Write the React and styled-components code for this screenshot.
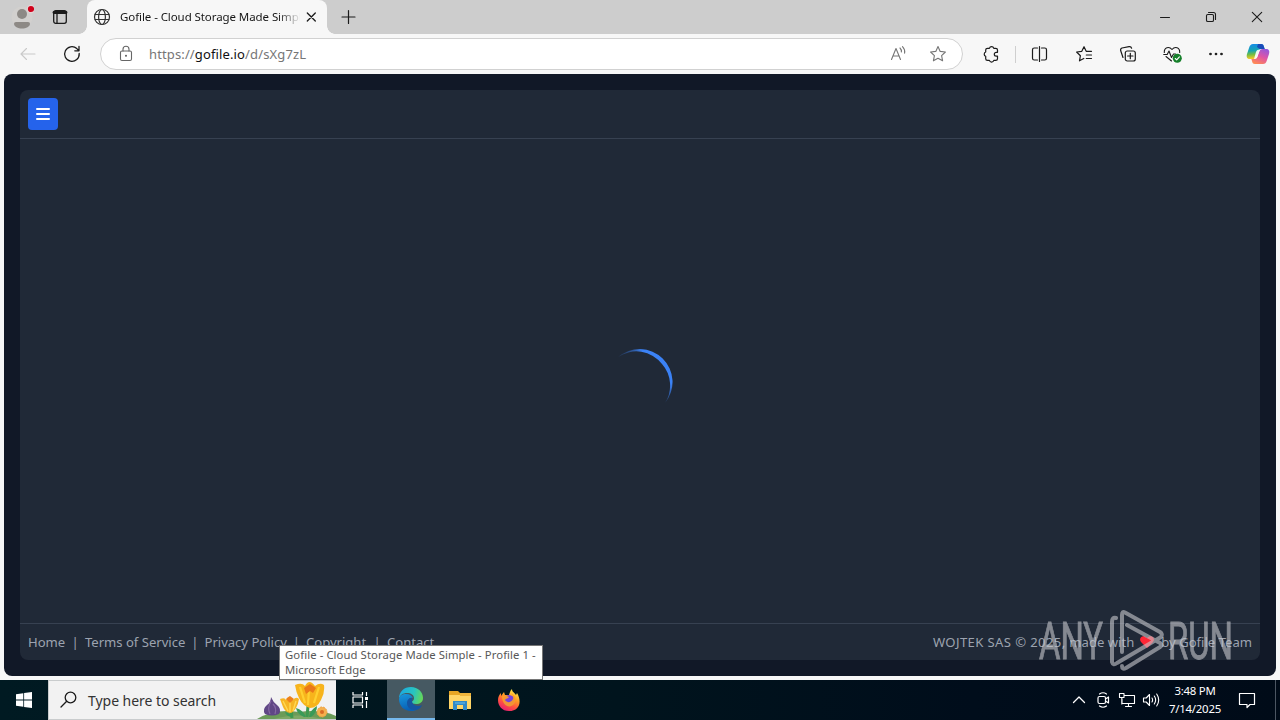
import React from "react";
import styled, { createGlobalStyle } from "styled-components";

const Global = createGlobalStyle`
  * { box-sizing: border-box; }
  body { margin: 0; overflow: hidden; font-family: "Noto Sans", "Open Sans", sans-serif; }
  svg { display: block; flex: none; }
`;

const Screen = styled.div`
  position: relative;
  width: 1280px;
  height: 720px;
  display: flex;
  flex-direction: column;
  background: #f7f7f7;
`;
const TabStrip = styled.div`
  height: 34px;
  display: flex;
  background: #cdcdcd;
`;
const Slot = styled.div`
  width: ${(p) => p.$w}px;
  height: ${(p) => p.$h || 34}px;
  margin-left: ${(p) => p.$ml || 0}px;
  display: flex;
  align-items: center;
  justify-content: center;
  flex: none;
`;
const Tab = styled.div`
  position: relative;
  width: 240px;
  height: 34px;
  margin-left: 6px;
  padding: 0 8px 0 5px;
  display: flex;
  align-items: center;
  background: #f7f7f7;
  border-radius: 8px 8px 0 0;
  &::before, &::after {
    content: "";
    position: absolute;
    bottom: 0;
    width: 8px;
    height: 8px;
  }
  &::before { left: -8px; background: radial-gradient(circle at 0 0, transparent 7.5px, #f7f7f7 8px); }
  &::after { right: -8px; background: radial-gradient(circle at 100% 0, transparent 7.5px, #f7f7f7 8px); }
`;
const TabTitle = styled.div`
  width: 180px;
  margin-left: 8px;
  overflow: hidden;
  white-space: nowrap;
  font-size: 11.5px;
  line-height: 16px;
  letter-spacing: -0.08px;
  color: #161616;
  mask-image: linear-gradient(90deg, #000 158px, transparent 181px);
`;
const WindowButtons = styled.div`
  display: flex;
  margin-left: auto;
`;
const Toolbar = styled.div`
  height: 40px;
  padding-left: 6px;
  display: flex;
`;
const AddressBar = styled.div`
  width: 863px;
  height: 32px;
  margin: 4px 6px 0;
  padding: 0 4px 0 15px;
  display: flex;
  align-items: center;
  border: 1px solid #d1d1d1;
  border-radius: 16px;
  background: #fff;
`;
const Url = styled.div`
  margin-left: 13px;
  flex: 1;
  font-size: 13px;
  line-height: 20px;
  letter-spacing: 0.13px;
  color: #767676;
  b { font-weight: 400; color: #111; }
`;
const Divider = styled.div`
  width: 1px;
  height: 17px;
  margin: 12px 1px 0 2px;
  background: #cfcfcf;
`;
const Page = styled.main`
  height: 602px;
  margin: 0 4px 4px;
  padding: 16px;
  background: #111827;
  border-radius: 8px;
`;
const Panel = styled.div`
  height: 570px;
  display: flex;
  flex-direction: column;
  background: #202937;
  border-radius: 8px;
`;
const PanelHeader = styled.header`
  height: 49px;
  padding: 8px;
  border-bottom: 1px solid #374151;
`;
const MenuButton = styled.button`
  width: 30px;
  height: 32px;
  padding: 0;
  display: flex;
  align-items: center;
  justify-content: center;
  border: 0;
  border-radius: 4px;
  background: #2563eb;
`;
const Content = styled.div`
  flex: 1;
  padding: 2px 0 0 1px;
  display: flex;
  align-items: center;
  justify-content: center;
`;
const Footer = styled.footer`
  height: 37px;
  padding: 0 8px;
  display: flex;
  justify-content: space-between;
  align-items: center;
  border-top: 1px solid #374151;
  font-size: 13.1px;
  line-height: 20px;
  color: #9ca3af;
  white-space: nowrap;
`;
const Links = styled.nav`
  display: flex;
`;
const FooterLink = styled.span`
  width: ${(p) => p.$w}px;
  letter-spacing: -0.02px;
`;
const Bar = styled.span`
  width: ${(p) => p.$w || 20}px;
  text-align: center;
`;
const Credit = styled.div`
  display: flex;
  align-items: center;
  white-space: pre;
  svg { margin: 0 6px 0 5px; }
`;
const Company = styled.span`
  letter-spacing: 0.38px;
`;
const Taskbar = styled.div`
  height: 40px;
  display: flex;
  background: linear-gradient(90deg, #001a22 0%, #00141d 48%, #000d1b 76%, #000b18 100%);
`;
const Search = styled.div`
  width: 288px;
  height: 40px;
  padding-left: 10px;
  display: flex;
  align-items: center;
  background: #f2f2f2;
  border: solid #c9cccd;
  border-width: 1px 0 1px 1px;
`;
const SearchText = styled.div`
  margin-left: 9px;
  padding-top: 2px;
  flex: 1;
  font-size: 14px;
  line-height: 20px;
  letter-spacing: -0.04px;
  color: #333;
`;
const ActiveApp = styled(Slot)`
  background: #465962;
  border-bottom: 2px solid #76b9ed;
`;
const Tray = styled.div`
  margin-left: auto;
  display: flex;
`;
const Clock = styled.div`
  width: 64px;
  padding-top: 2px;
  font-size: 11.4px;
  line-height: 18px;
  letter-spacing: -0.25px;
  text-align: center;
  white-space: nowrap;
  color: #fff;
`;
const ShowDesktop = styled.div`
  width: 5px;
  border-left: 1px solid #4c5662;
`;
const Tooltip = styled.div`
  position: absolute;
  left: 279px;
  top: 645px;
  width: 264px;
  height: 35px;
  padding: 1px 5px;
  border: 1px solid #767676;
  background: #fff;
  font-size: 11.3px;
  line-height: 15px;
  letter-spacing: 0.08px;
  white-space: nowrap;
  color: #575757;
`;
const Watermark = styled.svg`
  position: absolute;
  left: 1034px;
  top: 604px;
  opacity: 0.6;
`;

function Icon({ s = 20, c = "#1b1b1b", w = 1.1, children }) {
  return (
    <svg width={s} height={s} viewBox={`0 0 ${s} ${s}`} fill="none" stroke={c} strokeWidth={w} strokeLinecap="round" strokeLinejoin="round">
      {children}
    </svg>
  );
}

const STAR = "M10 2.6 12.2 7.4 17.4 8 13.6 11.6 14.6 16.8 10 14.2 5.4 16.8 6.4 11.6 2.6 8 7.8 7.4Z";

function Profile() {
  return (
    <svg width="24" height="28" viewBox="0 0 24 28">
      <circle cx="12" cy="14" r="10.5" fill="#d2d0ce" />
      <circle cx="12" cy="11" r="5" fill="#8d8985" />
      <path d="M4 20.500q0-1.500 2-1.500h12q2 0 2 1.500c0 3.500-4 5-8 5s-8-1.500-8-5Z" fill="#8d8985" />
      <circle cx="21" cy="6" r="4.2" fill="#e4d4d5" />
      <circle cx="21" cy="6" r="3.1" fill="#d0021b" />
    </svg>
  );
}

function Copilot() {
  return (
    <svg width="24" height="22" viewBox="0 0 24 22">
      <defs>
        <linearGradient id="cpA" x1="0.2" y1="0" x2="0.3" y2="1">
          <stop offset="0" stopColor="#168bea" /><stop offset=".45" stopColor="#16a5b0" /><stop offset=".7" stopColor="#74bd42" /><stop offset="1" stopColor="#ffc928" />
        </linearGradient>
        <linearGradient id="cpB" x1=".8" y1="0" x2=".3" y2="1">
          <stop offset="0" stopColor="#9557dc" /><stop offset=".5" stopColor="#df54a5" /><stop offset="1" stopColor="#ff8a55" />
        </linearGradient>
      </defs>
      <path d="M7 1h8c2 0 2.600 1 3 3l.7 2h-3c-2 0-2.700 1-3.300 3l-1.400 4c-.7 2-1.600 3-3.800 3H4c-3 0-3.800-2-3-5l2-6c1-3 2-4 4-4Z" fill="url(#cpA)" />
      <path d="M12 1h3c2 0 2.600 1 3 3l.7 2h-5L11 4Z" fill="#194bb9" />
      <path d="M17 21H9c-2 0-2.600-1-3-3l-.6-2h3c2 0 2.700-1 3.300-3l1.400-4c.7-2 1.600-3 3.800-3H20c3 0 3.800 2 3 5l-2 6c-1 3-2 4-4 4Z" fill="url(#cpB)" />
      <path d="m10 9-2 7c2 0 3-1 3.600-3l1.400-4c.4-1.200 1-2.100 1.700-2.600h-1.200C12 6.400 10.700 7 10 9Z" fill="#fff" opacity=".9" />
    </svg>
  );
}

function Spinner() {
  return (
    <svg width="72" height="72" viewBox="0 0 72 72">
      <defs>
        <linearGradient id="sp" x1="14" y1="10" x2="61" y2="60" gradientUnits="userSpaceOnUse">
          <stop offset="0" stopColor="#3b82f6" stopOpacity=".15" /><stop offset=".18" stopColor="#3b82f6" /><stop offset=".82" stopColor="#3b82f6" /><stop offset="1" stopColor="#3b82f6" stopOpacity=".15" />
        </linearGradient>
      </defs>
      <path d="M13 11A33 33 0 0 1 60 57A32.500 32.500 0 0 0 57 18A32.500 32.500 0 0 0 13 11Z" fill="url(#sp)" />
    </svg>
  );
}

function Flowers() {
  return (
    <svg width="79" height="38" viewBox="0 0 79 38">
      <path d="M0 38Q18 27 42 31Q64 28 79 35V38Z" fill="#6b9b58" />
      <path d="M17 38Q40 31 65 38Z" fill="#7fa866" />
      <path d="M47 36Q40 33 39 27Q46 29 49 36M52 36Q53 29 60 25Q60 32 54 36M34 36q-5-1-6-5 5 1 7 5" fill="#3a9a58" />
      <path d="M14 16Q16 21 20 24Q25 28 22 33Q15 36 8 33Q5 28 10 24Q14 21 14 16Z" fill="#604785" />
      <path d="M14 20Q10 27 13 33M16 23Q20 27 18 33" stroke="#8468a2" strokeWidth="1.200" fill="none" />
      <path d="M34 28 35 37M51 25 50 36" stroke="#3e9950" strokeWidth="3" fill="none" />
      <path d="M23 18q5-2 6 1 3-7 7 0 3-4 6-1-1 6-3 9-3 5-6 5-5-1-7-6Z" fill="#f6b523" />
      <path d="m26 20 5 10m2-9v10m6-11-3 10" stroke="#ffd851" strokeWidth="1.400" fill="none" />
      <path d="m29 18 4-3 4 3-4 4Z" fill="#ec7f1d" />
      <path d="M38 4q7-3 10 1 4-8 10 0 5-4 9-1 1 8-3 15-4 8-11 8-7-2-11-10-3-6-4-13Z" fill="#f7b41c" />
      <path d="m43 6 5 16m4-14-1 16m11-18-5 16" stroke="#ffd030" strokeWidth="2.200" fill="none" />
      <path d="m47 7 6-4 6 4-3 5-3-2-4 3Z" fill="#ea7919" />
      <circle cx="65" cy="31" r="5" fill="#f5b04d" stroke="#eea344" strokeDasharray="2 1" />
      <circle cx="65" cy="31" r="2" fill="#da6b24" />
    </svg>
  );
}

function Edge() {
  return (
    <svg width="26" height="26" viewBox="0 0 26 26">
      <defs>
        <linearGradient id="edA" x1="0" y1=".3" x2="1" y2=".5"><stop stopColor="#1ba9e4" /><stop offset=".6" stopColor="#28c4c0" /><stop offset="1" stopColor="#65d759" /></linearGradient>
        <linearGradient id="edB" x1="0" y1="0" x2=".3" y2="1"><stop stopColor="#1998dd" /><stop offset="1" stopColor="#0860b5" /></linearGradient>
      </defs>
      <path d="M1 13C1 5.500 6 1 13 1s12 5 12 11c0 4-3 6-7 6-3 0-4-1-4-2s2-1 2-4c0-3-3-5-7-5-4 0-7 2-8 6Z" fill="url(#edA)" />
      <path d="M1 13c1-4 4-5 7-5 4 0 6 2 7 4-2-1-5 0-5 4 0 5 5 8 10 7-2 1.500-4 2-7 2C6 25 1 20 1 13Z" fill="url(#edB)" />
      <path d="M14 12c-3 0-5 2-5 5 0 4 3 7 7 7 4 0 7-2 8-5-3 2-9 1-10-3-.3-2 1-3 0-4Z" fill="#1554a2" />
    </svg>
  );
}

function Folder() {
  return (
    <svg width="24" height="22" viewBox="0 0 24 22">
      <path d="M1 2h9l2 2h11v16H1Z" fill="#e7a625" />
      <path d="M1 6h22v14H1Z" fill="#ffd567" />
      <path d="M12 4h11v3H12Z" fill="#f0b53c" />
      <path d="M5 12h14v9h-4v-5H9v5H5Z" fill="#3189c7" />
      <path d="M7 13h10v2H7Z" fill="#4da3d9" />
    </svg>
  );
}

function Firefox() {
  return (
    <svg width="24" height="24" viewBox="0 0 24 24">
      <defs><linearGradient id="ff" x1=".8" y1="0" x2=".3" y2="1"><stop stopColor="#fff44f" /><stop offset=".4" stopColor="#ff9b25" /><stop offset=".7" stopColor="#ff4f42" /><stop offset="1" stopColor="#e61e72" /></linearGradient></defs>
      <path d="M12 23C5 23 1 18 1 12c0-3 1-5 3-7v3l3-4 1 3h4c1-3 1-4 3-6 0 3 2 3 4 6l1-2c5 8 3 18-8 18Z" fill="url(#ff)" />
      <circle cx="12" cy="12.500" r="5.500" fill="#7542dc" />
      <path d="M5 8c3-2 5 0 7 1-1 2-3 1-4 3 2 3 6 3 8-1 1-3-1-4-2-6 4 2 6 7 3 11-4 5-12 2-12-8Z" fill="#ff9e24" opacity=".9" />
    </svg>
  );
}

export default function App() {
  return (
    <Screen>
      <Global />
      <TabStrip>
        <Slot $w={28} $ml={8}><Profile /></Slot>
        <Slot $w={42} $ml={3}>
          <Icon w={1.3}><rect x="3.700" y="3.700" width="12.600" height="12.600" rx="2" /><path d="M4 5.500h12" strokeWidth="2.800" /><path d="M7 6v10" /></Icon>
        </Slot>
        <Tab>
          <Icon c="#333" w={1.2}><circle cx="10" cy="10" r="7.500" /><ellipse cx="10" cy="10" rx="3.400" ry="7.500" /><path d="M3.200 7.500h13.600M3.200 12.500h13.600" /></Icon>
          <TabTitle>Gofile - Cloud Storage Made Simple</TabTitle>
          <Slot $w={16}><Icon w={1.3}><path d="m9.300 6 8 8m0-8-8 8" /></Icon></Slot>
        </Tab>
        <Slot $w={42}><Icon w={1.2}><path d="M10.500 3.500v13M4 10h13" /></Icon></Slot>
        <WindowButtons>
          <Slot $w={46}><Icon w={1}><path d="M5.500 10.500h9" /></Icon></Slot>
          <Slot $w={46}><Icon w={1.1}><rect x="5.500" y="7.500" width="7" height="7" rx="1.300" /><path d="M7.500 5.500h5a2 2 0 0 1 2 2v5" /></Icon></Slot>
          <Slot $w={46}><Icon w={1.1}><path d="m5.300 5.300 9.400 9.400m0-9.400-9.400 9.400" /></Icon></Slot>
        </WindowButtons>
      </TabStrip>

      <Toolbar>
        <Slot $w={44} $h={40}><Icon c="#c9c9c9"><path d="M17 10H3m5.500-5.500L3 10l5.500 5.500" /></Icon></Slot>
        <Slot $w={44} $h={40}><Icon w={1.3}><path d="M17.200 9.500A7.300 7.300 0 1 1 14.800 4.600L17 6.700M17 2.500v4.300h-4.200" /></Icon></Slot>
        <AddressBar>
          <Icon c="#666"><rect x="4.500" y="7" width="11" height="9.500" rx="1.500" /><path d="M7 7V5.300a3 3 0 0 1 6 0V7" /><circle cx="10" cy="11.700" r=".5" fill="#666" /></Icon>
          <Url>https://<b>gofile.io</b>/d/sXg7zL</Url>
          <Slot $w={40} $h={30}><Icon c="#767676"><path d="m3.500 15.500 4.500-11 4.500 11M5.200 12h5.600M12 4q1.700 1.700 1.400 4M14.500 2.600q2.900 3 2.100 6.600" /></Icon></Slot>
          <Slot $w={40} $h={30}><Icon c="#767676"><path d={STAR} /></Icon></Slot>
        </AddressBar>
        <Slot $w={44} $h={40}><Icon w={1.2}><path d="M6.500 4.300h1.900a2.300 2.300 0 0 1 4.400 0h1.900q1.800 0 1.800 1.700v2.300h-1.300a1.900 1.900 0 0 0 0 3.800h1.300v2.600q0 1.700-1.800 1.700h-1.900a2.300 2.300 0 0 1-4.400 0H6.500q-1.800 0-1.800-1.700v-2.400a2.300 2.300 0 0 1 0-4.300V6q0-1.700 1.800-1.700Z" /></Icon></Slot>
        <Divider />
        <Slot $w={44} $h={40}><Icon w={1.2}><path d="M8.500 4H5.300Q3.500 4 3.500 5.800v8.400Q3.500 16 5.300 16H8.500M12.500 4h3.200Q17.500 4 17.500 5.800v8.400q0 1.800-1.800 1.800H12.500M10.500 2.500v15" /></Icon></Slot>
        <Slot $w={44} $h={40} $ml={1}><Icon w={1.2}><path d="M17.500 7.300h-5.300L10 2.700 7.800 7.300 2.600 8l3.800 3.700-.9 5.100 4.300-2.300M12.300 11h5.200M12.300 14.500h5.200" /></Icon></Slot>
        <Slot $w={44} $h={40}><Icon w={1.2}><rect x="7.300" y="7" width="10" height="10" rx="2" /><path d="M12.300 9.300v5.400M9.600 12H15M5 13.500 2.800 7Q2 4.700 4 4l7-1.300q2-.4 2.600 1.500" /></Icon></Slot>
        <Slot $w={44} $h={40}><Icon w={1.1}><path d="M2.300 8.500C2 3.500 7 2 10 5.500c3-3.500 8-2 7.700 3M4 12.500l5.500 4.500M1.700 10.500h3.500l1.800-3.500 2.500 6.500 2-3.500h2" /><circle cx="15.300" cy="14.300" r="4.500" fill="#16802b" stroke="none" /><path d="m13.300 14.500 1.400 1.400 2.700-3" stroke="#fff" /></Icon></Slot>
        <Slot $w={44} $h={40}><Icon><circle cx="4.500" cy="10" r=".8" fill="#222" /><circle cx="10" cy="10" r=".8" fill="#222" /><circle cx="15.500" cy="10" r=".8" fill="#222" /></Icon></Slot>
        <Slot $w={40} $h={40}><Copilot /></Slot>
      </Toolbar>

      <Page>
        <Panel>
          <PanelHeader><MenuButton aria-label="Menu"><Icon c="#fff" w={2}><path d="M4 5h12M4 10h12M4 15h12" /></Icon></MenuButton></PanelHeader>
          <Content><Spinner /></Content>
          <Footer>
            <Links>
              <FooterLink $w={37}>Home</FooterLink><Bar>|</Bar>
              <FooterLink $w={100}>Terms of Service</FooterLink><Bar $w={19.5}>|</Bar>
              <FooterLink $w={82}>Privacy Policy</FooterLink><Bar $w={19.5}>|</Bar>
              <FooterLink $w={61}>Copyright</FooterLink><Bar>|</Bar>
              <FooterLink $w={49}>Contact</FooterLink>
            </Links>
            <Credit>
              <Company>WOJTEK SAS © 2025, </Company>made with
              <svg width="16" height="14" viewBox="0 0 16 14"><path d="M8 13 2 7C-1 3 4-1 8 3c4-4 9 0 6 4Z" fill="#ff2635" /></svg>
              by Gofile Team
            </Credit>
          </Footer>
        </Panel>
      </Page>

      <Taskbar>
        <Slot $w={48} $h={40}><svg width="16" height="16" viewBox="0 0 16 16"><path fill="#fff" d="M0 2.300 7.300 1.200v6.400H0ZM8.100 1.100 16 0v7.600H8.100ZM0 8.400h7.300v6.400L0 13.700ZM8.100 8.400H16V16l-7.900-1.100Z" /></svg></Slot>
        <Search>
          <Icon w={1.3}><circle cx="11.500" cy="7.500" r="5.300" /><path d="m7.700 11.300-5.700 5.700" /></Icon>
          <SearchText>Type here to search</SearchText>
          <Flowers />
        </Search>
        <Slot $w={51} $h={40}>
          <Icon c="#fff" w={1.2}><path d="M1 2v3h9.500V2M1 18v-3h9.500v3M14.500 2v4M14.500 11v7" strokeLinecap="butt" /><rect x="1" y="7" width="9.500" height="6" /><path d="M13 8.500h3" strokeWidth="3" strokeLinecap="butt" /></Icon>
        </Slot>
        <ActiveApp $w={48} $h={40}><Edge /></ActiveApp>
        <Slot $w={49} $h={40}><Folder /></Slot>
        <Slot $w={49} $h={40}><Firefox /></Slot>
        <Tray>
          <Slot $w={24} $h={40}><Icon c="#fff" w={1.3}><path d="m4.500 12.500 5.500-5.500 5.500 5.500" /></Icon></Slot>
          <Slot $w={24} $h={40}><Icon c="#fff" w={1.2}><rect x="5" y="6.500" width="7.500" height="7" rx="1.500" /><path d="m12.500 9 3-2v6l-3-2M6.500 4q3.500-2.500 7 0M6.500 16q3.500 2.500 7 0" /></Icon></Slot>
          <Slot $w={24} $h={40}><Icon c="#fff" w={1.1}><path d="M7 5.500h10.500v8H5V9M11.500 13.500v3M8.500 16.500h6M2.500 3.500h4.500v4H2.500ZM4.800 7.500V14" /></Icon></Slot>
          <Slot $w={24} $h={40}><Icon c="#fff" w={1.1}><path d="M2.500 8h2.700L8.500 4.500v11L5.200 12H2.500ZM11 8q1.200 2 0 4M13.300 6q2.700 4 0 8M15.700 4q4 6 0 12" /></Icon></Slot>
          <Clock><div>3:48 PM</div><div>7/14/2025</div></Clock>
          <Slot $w={40} $h={40}><Icon c="#fff" w={1.2}><path d="M2.500 3.500h15v11H13l-3 3v-3H2.500Z" /></Icon></Slot>
          <Slot $w={8} $h={40} />
          <ShowDesktop />
        </Tray>
      </Taskbar>

      <Tooltip><div>Gofile - Cloud Storage Made Simple - Profile 1 -</div><div>Microsoft Edge</div></Tooltip>
      <Watermark width="204" height="74" viewBox="0 0 204 74">
        <g fill="#c8c9ce" stroke="#c8c9ce" strokeWidth=".9" fontFamily="Roboto, sans-serif" fontSize="52">
          <text x="5" y="55" textLength="64" lengthAdjust="spacingAndGlyphs">ANY</text>
          <text x="134" y="55" textLength="65" lengthAdjust="spacingAndGlyphs">RUN</text>
        </g>
        <path
          d="M82 14Q78 13 78 18V58Q79 62 83 59L127 33Q129 30 126 28L91 8.500Q88 7 88 11V48M93 21 126 39Q129 41 126 43L92 64Q88 66 88 62"
          fill="none" stroke="#c8c9ce" strokeWidth="4" strokeLinejoin="round" strokeLinecap="round"
        />
      </Watermark>
    </Screen>
  );
}
